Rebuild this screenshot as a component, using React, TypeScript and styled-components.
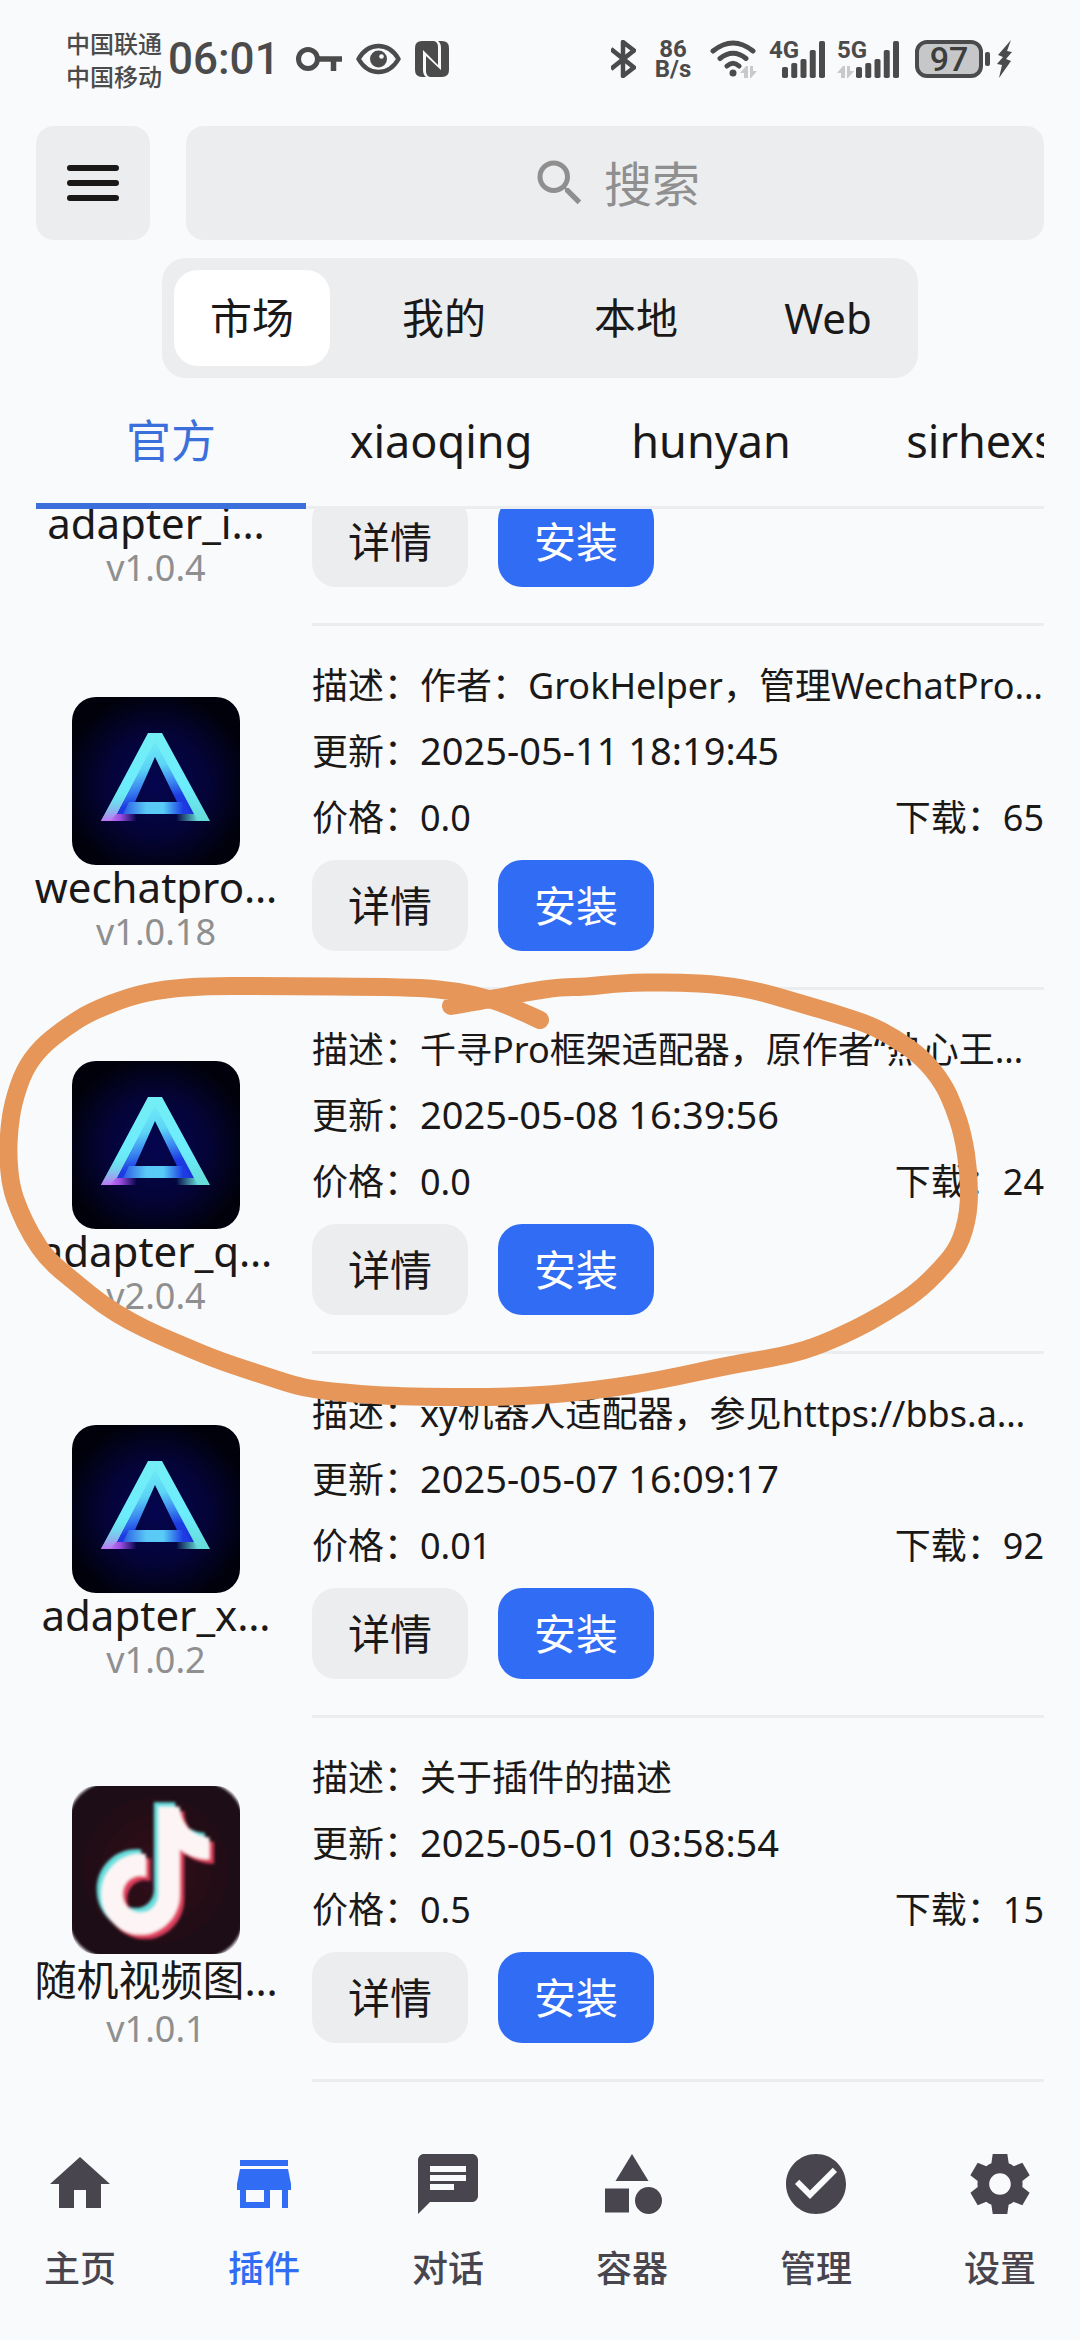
import React, { useLayoutEffect, useRef } from "react";
import styled, { createGlobalStyle } from "styled-components";
import {
  MdCategory,
  MdChat,
  MdCheckCircle,
  MdHome,
  MdSearch,
  MdStore,
} from "react-icons/md";

const color = {
  page: "#f8fafc",
  panel: "#ecedef",
  ink: "#1b1818",
  muted: "#8f8f90",
  accent: "#306cf4",
  tab: "#3b6fdc",
  status: "#4b4b4b",
  nav: "#48454e",
  marker: "#e59658",
};

const GlobalStyle = createGlobalStyle`
  *, *::before, *::after { box-sizing: border-box; }
  body {
    margin: 0;
    background: ${color.page};
    color: ${color.ink};
    font-family: "Noto Sans", "Noto Sans CJK SC", sans-serif;
  }
  button, input { font: inherit; color: inherit; border: 0; padding: 0; background: none; }
  ul { list-style: none; margin: 0; padding: 0; }
  svg { display: block; flex: none; }
`;

const Screen = styled.div`
  position: relative;
  display: flex;
  flex-direction: column;
  height: 100vh;
  overflow: hidden;
  background: ${color.page};
`;

/* ---------- status bar ---------- */

const StatusBar = styled.header`
  display: flex;
  justify-content: space-between;
  align-items: center;
  height: 126px;
  padding: 0 68px 8px 66px;
  color: ${color.status};
`;

const StatusGroup = styled.div<{ $gap: number }>`
  display: flex;
  align-items: center;
  gap: ${(p) => p.$gap}px;
`;

const Carriers = styled.div`
  font: 500 24px/33px "Noto Sans CJK SC", sans-serif;
  white-space: nowrap;
`;

const Clock = styled.time`
  font: 500 44px/48px Roboto, sans-serif;
  padding: 0 10px 0 0;
`;

const Speed = styled.div`
  width: 50px;
  font: 700 24px/20px Roboto, sans-serif;
  text-align: center;
`;

const Signal = styled.div`
  position: relative;
`;

const NetworkKind = styled.span`
  position: absolute;
  top: 0;
  left: 0;
  font: 700 24px/20px Roboto, sans-serif;
`;

const Battery = styled.div`
  display: flex;
  align-items: center;
  gap: 2px;
  padding-left: 4px;
`;

const BatteryCell = styled.span`
  width: 68px;
  height: 38px;
  border: 4px solid ${color.status};
  border-radius: 12px;
  background: #c6c7c8;
  color: #3d3d3d;
  font: 500 34px/31px Roboto, sans-serif;
  text-align: center;
`;

const BatteryTip = styled.span`
  width: 5px;
  height: 14px;
  margin-right: 5px;
  border-radius: 2px;
  background: ${color.status};
`;

const KeyIcon = () => (
  <svg width="46" height="26" viewBox="0 0 46 26" fill="none" stroke={color.status}>
    <circle cx="12" cy="13" r="9.5" strokeWidth="5" />
    <path d="M22 13H46M37.500 13V25" strokeWidth="5.500" />
  </svg>
);

const EyeIcon = () => (
  <svg width="45" height="32" viewBox="0 0 45 32" fill="none" stroke={color.status}>
    <path d="M2.500 16Q10 3 22.500 3T42.500 16Q35 29 22.500 29T2.500 16Z" strokeWidth="4.500" strokeLinejoin="round" />
    <circle cx="22.500" cy="16" r="8.500" fill={color.status} stroke="none" />
    <circle cx="25.500" cy="13.500" r="2.300" fill={color.page} stroke="none" />
  </svg>
);

const NfcIcon = () => (
  <svg width="34" height="36" viewBox="0 0 34 36">
    <path fill={color.status} d="M7 0h12q4 1 4 6v18L8 9v20q0 5 3 7H7q-7 0-7-7V7q0-7 7-7Z" />
    <path fill={color.status} d="M27 36H15q-4-1-4-6V15l15 14V7q0-5-3-7h4q7 0 7 7v22q0 7-7 7Z" />
  </svg>
);

const BluetoothIcon = () => (
  <svg width="25" height="38" viewBox="0 0 25 38" fill="none" stroke={color.status} strokeWidth="4.500" strokeLinejoin="round">
    <path d="M0 9L23 27.500L12 36V2L23 10.500L0 29" />
  </svg>
);

const Arrows = ({ x, y }: { x: number; y: number }) => (
  <path
    transform={`translate(${x} ${y})`}
    fill="#c8c9ca"
    stroke="none"
    d="M0 7L6 0H8V12H4V7ZM17 5L11 12H10V0H13V5Z"
  />
);

const WifiIcon = () => (
  <svg width="47" height="38" viewBox="0 0 47 38" fill="none" stroke={color.status} strokeWidth="5" strokeLinecap="round">
    <path d="M3 11Q23 -5 43 11M10 18.500Q23 8 36 18.500M17 26Q23 20.500 29 26" />
    <circle cx="23" cy="33" r="3.500" fill={color.status} stroke="none" />
    <Arrows x={30} y={26} />
  </svg>
);

const barHeights = [11, 15, 19, 28, 37];

const SignalBars = ({ width, arrows }: { width: number; arrows?: boolean }) => (
  <svg width={width} height="38" viewBox={`0 0 ${width} 38`}>
    {barHeights.map((h, i) => (
      <rect key={h} x={width - 43 + i * 9.25} y={38 - h} width="6" height={h} rx="1.800" fill={color.status} />
    ))}
    {arrows && <Arrows x={0} y={26} />}
  </svg>
);

const BoltIcon = () => (
  <svg width="15" height="40" viewBox="0 0 15 40" fill={color.status}>
    <path d="M14 1L1 16L6 18L0 25L5 26L2 39L14 22L9 20L15 13L10 12Z" />
  </svg>
);

/* ---------- search and sections ---------- */

const SearchRow = styled.div`
  display: flex;
  gap: 36px;
  height: 114px;
  padding: 0 36px;
`;

const MenuButton = styled.button`
  display: grid;
  place-items: center;
  width: 114px;
  border-radius: 18px;
  background: ${color.panel};
`;

const SearchBox = styled.label`
  flex: 1;
  display: flex;
  justify-content: center;
  align-items: center;
  gap: 14px;
  border-radius: 18px;
  background: ${color.panel};
  color: ${color.muted};
`;

const SearchInput = styled.input`
  width: 96px;
  height: 72px;
  font-size: 48px;
  outline: none;
  &::placeholder { color: ${color.muted}; opacity: 1; }
`;

const Segments = styled.nav`
  align-self: center;
  display: flex;
  gap: 36px;
  margin-top: 18px;
  padding: 12px;
  border-radius: 24px;
  background: ${color.panel};
`;

const Segment = styled.button<{ $active: boolean }>`
  width: 156px;
  height: 96px;
  border-radius: 24px;
  background: ${(p) => (p.$active ? "#ffffff" : "transparent")};
  font-size: 42px;
  line-height: 60px;
`;

const Tabs = styled.nav`
  flex: none;
  display: flex;
  height: 131px;
  margin: 0 36px;
  overflow: hidden;
  box-shadow: inset 0 -3px ${color.panel};
`;

const Tab = styled.button<{ $active: boolean }>`
  flex: 0 0 270px;
  border-bottom: 6px solid ${(p) => (p.$active ? color.tab : "transparent")};
  color: ${(p) => (p.$active ? color.tab : color.ink)};
  font-size: 45px;
  line-height: 60px;
`;

/* ---------- plugin list ---------- */

const List = styled.ul`
  flex: 1;
  min-height: 0;
  padding: 0 36px;
  overflow-x: hidden;
  overflow-y: auto;
  scrollbar-width: none;
`;

const Row = styled.li`
  display: flex;
  gap: 36px;
`;

const Summary = styled.div<{ $tall: boolean }>`
  flex: none;
  display: flex;
  flex-direction: column;
  align-items: center;
  width: 240px;
  padding-top: ${(p) => (p.$tall ? 68 : 71)}px;
`;

const PluginName = styled.strong<{ $tall: boolean }>`
  font-size: 42px;
  font-weight: 400;
  line-height: ${(p) => (p.$tall ? 52 : 44)}px;
  white-space: nowrap;
`;

const Version = styled.span`
  color: ${color.muted};
  font-size: 36px;
  line-height: 46px;
`;

const Details = styled.div`
  flex: 1;
  display: flex;
  flex-direction: column;
  justify-content: flex-end;
  min-width: 0;
  min-height: 364px;
  padding: 27px 0 36px;
  border-bottom: 3px solid ${color.panel};
`;

const Line = styled.div`
  display: flex;
  justify-content: space-between;
  font-size: 36px;
  line-height: 66px;
  white-space: nowrap;
`;

const Stamp = styled.time`
  font-size: 38px;
  line-height: 1;
`;

const Actions = styled.div`
  display: flex;
  gap: 30px;
  margin-top: 9px;
`;

const Action = styled.button<{ $primary?: boolean }>`
  width: 156px;
  height: 91px;
  border-radius: 24px;
  background: ${(p) => (p.$primary ? color.accent : color.panel)};
  color: ${(p) => (p.$primary ? "#ffffff" : color.ink)};
  font-size: 42px;
  line-height: 60px;
`;

const IconTile = styled.svg`
  width: 168px;
  height: 168px;
  border-radius: 24px;
`;

const AdapterLogo = ({ id }: { id: string }) => (
  <IconTile viewBox="0 0 168 168" aria-hidden="true">
    <defs>
      <radialGradient id={`${id}-bg`} cx="0.5" cy="0.52" r="0.55">
        <stop offset="0" stopColor="#050550" />
        <stop offset="0.55" stopColor="#040438" />
        <stop offset="1" stopColor="#01010c" />
      </radialGradient>
      <linearGradient id={`${id}-leg`} x1="0" y1="0" x2="0" y2="1">
        <stop offset="0" stopColor="#74eef4" />
        <stop offset="0.6" stopColor="#6cecfc" />
        <stop offset="1" stopColor="#66dcd8" />
      </linearGradient>
      <linearGradient id={`${id}-foot`} gradientUnits="userSpaceOnUse" x1="0" y1="98" x2="0" y2="124">
        <stop offset="0" stopColor="#78cffa" stopOpacity="0" />
        <stop offset="1" stopColor="#c274f4" />
      </linearGradient>
      <linearGradient id={`${id}-toe`} x1="0" y1="0" x2="1" y2="0">
        <stop offset="0" stopColor="#c274f4" />
        <stop offset="0.4" stopColor="#9a4fe0" />
        <stop offset="1" stopColor="#0a0550" />
      </linearGradient>
      <linearGradient id={`${id}-heel`} x1="0" y1="0" x2="1" y2="0">
        <stop offset="0" stopColor="#06104a" />
        <stop offset="1" stopColor="#66dcd8" />
      </linearGradient>
      <linearGradient id={`${id}-inner`} gradientUnits="userSpaceOnUse" x1="76" y1="44" x2="92" y2="117">
        <stop offset="0" stopColor="#70ecf6" />
        <stop offset="0.35" stopColor="#5cd4f6" />
        <stop offset="0.6" stopColor="#3a86f0" />
        <stop offset="0.8" stopColor="#1c3ce4" />
        <stop offset="1" stopColor="#1c34dc" />
      </linearGradient>
      <linearGradient id={`${id}-bar`} x1="0" y1="0" x2="1" y2="0">
        <stop offset="0" stopColor="#2a5ce4" />
        <stop offset="0.35" stopColor="#5ac8f6" />
        <stop offset="0.6" stopColor="#58ccf6" />
        <stop offset="0.9" stopColor="#1c3be4" />
      </linearGradient>
    </defs>
    <rect width="168" height="168" fill={`url(#${id}-bg)`} />
    <path d="M76 36H90L138 124H122L118 117L83 46L45 117L40 124H29Z" fill={`url(#${id}-leg)`} />
    <path d="M43 98H55L45 117L40 124H29Z" fill={`url(#${id}-foot)`} />
    <path d="M44 117H64V124H38Z" fill={`url(#${id}-toe)`} />
    <path d="M105 117H122L126 124H105Z" fill={`url(#${id}-heel)`} />
    <path fillRule="evenodd" d="M83 44L122 117H45ZM83 60L63 105H105Z" fill={`url(#${id}-inner)`} />
    <path d="M57 105H112L118 117H51Z" fill={`url(#${id}-bar)`} />
  </IconTile>
);

const notePath =
  "M16.6 5.82A4.278 4.278 0 0 1 15.54 3h-3.09v12.4a2.592 2.592 0 0 1-2.59 2.5c-1.42 0-2.6-1.16-2.6-2.6 0-1.72 1.66-3.01 3.37-2.48V9.66c-3.45-.46-6.47 2.22-6.47 5.64 0 3.33 2.76 5.7 5.69 5.7 3.14 0 5.69-2.55 5.69-5.7V9.01a7.35 7.35 0 0 0 4.3 1.38V7.3s-1.88.09-3.24-1.48z";

const VideoLogo = () => (
  <IconTile viewBox="0 0 168 168" aria-hidden="true">
    <defs>
      <radialGradient id="video-bg">
        <stop offset="0" stopColor="#340a1a" />
        <stop offset="1" stopColor="#1b0a17" />
      </radialGradient>
      <filter id="video-soft" x="-10%" y="-10%" width="120%" height="120%">
        <feGaussianBlur stdDeviation="1.600" />
      </filter>
    </defs>
    <rect width="168" height="168" fill="#eeeeef" />
    <rect x="-4" y="-4" width="176" height="176" rx="42" fill="url(#video-bg)" filter="url(#video-soft)" />
    <g filter="url(#video-soft)">
      <path d={notePath} fill="#68e0df" transform="translate(-4 -5) scale(6.900 7.100)" />
      <path d={notePath} fill="#e0405f" transform="translate(5 4) scale(6.900 7.100)" />
      <path d={notePath} fill="#fdf5f5" transform="translate(0.500 -0.500) scale(6.900 7.100)" />
    </g>
  </IconTile>
);

/* ---------- bottom navigation ---------- */

const BottomNav = styled.nav`
  flex: none;
  display: flex;
  gap: 24px;
  height: 258px;
  padding: 66px 0 48px;
`;

const NavItem = styled.button<{ $active: boolean }>`
  flex: 1;
  display: flex;
  flex-direction: column;
  align-items: center;
  gap: 22px;
  color: ${(p) => (p.$active ? color.accent : color.nav)};
  font: 500 36px/48px "Noto Sans CJK SC", sans-serif;
`;

const GearIcon = ({ size }: { size: number }) => (
  <svg width={size} height={size} viewBox="0 0 24 24" fill="currentColor">
    <path d="M19.44 12.99l-.01.02c.04-.33.08-.67.08-1.01 0-.34-.03-.66-.07-.99l.01.02 2.44-1.920-2.430-4.220-2.870 1.160.01.01c-.52-.4-1.090-.74-1.710-1h.01L14.440 2H9.570l-.44 3.070h.01c-.62.26-1.190.6-1.710 1l.01-.01-2.880-1.170-2.440 4.220 2.440 1.920.01-.02c-.04.33-.07.65-.07.99 0 .34.03.68.08 1.010l-.01-.02-2.430 1.910 2.430 4.200 2.880-1.150-.02-.04c.53.41 1.100.75 1.730 1.010h-.03L9.580 22h4.850l.44-3.070h-.01c.62-.26 1.200-.6 1.730-1.010l-.02.04 2.880 1.150 2.430-4.200-2.410-1.920zM12 15.600c-1.980 0-3.600-1.620-3.600-3.600s1.620-3.600 3.600-3.600 3.600 1.620 3.600 3.600-1.620 3.600-3.600 3.600z" />
  </svg>
);

/* ---------- hand-drawn marker ---------- */

const MarkerLayer = styled.svg`
  position: absolute;
  top: 0;
  left: 0;
  width: 100%;
  height: 100%;
  pointer-events: none;
`;

const markerPoints = [
  [451, 1006], [492, 999], [527, 992], [561, 987], [585, 987], [620, 983], [675, 982], [723, 985],
  [758, 991], [792, 1001], [833, 1013], [868, 1024], [895, 1038], [923, 1058], [943, 1083], [954, 1107],
  [963, 1135], [969, 1173], [969, 1213], [959, 1247], [940, 1270], [916, 1293], [885, 1313], [854, 1330],
  [813, 1348], [778, 1357], [730, 1365], [661, 1380], [599, 1390], [523, 1397], [406, 1397], [344, 1393],
  [303, 1388], [269, 1377], [220, 1361], [186, 1347], [158, 1335], [131, 1322], [103, 1305], [76, 1283],
  [48, 1260], [31, 1235], [19, 1210], [11, 1187], [8, 1157], [9, 1130], [13, 1103], [24, 1070],
  [41, 1047], [65, 1028], [90, 1012], [131, 996], [165, 989], [207, 986], [255, 986], [413, 987],
  [455, 991], [492, 999], [525, 1013], [540, 1020],
];

// Smooths the stroke by curving through the middle of every segment.
const markerPath = markerPoints.reduce((d, [x, y], i) => {
  if (i === 0) return `M${x} ${y}`;
  const next = markerPoints[i + 1];
  return next ? `${d}Q${x} ${y} ${(x + next[0]) / 2} ${(y + next[1]) / 2}` : `${d}L${x} ${y}`;
}, "");

type Plugin = {
  name: string;
  version: string;
  logo: "adapter" | "video";
  info?: { about: string; updated: string; price: string; downloads: number };
};

const plugins: Plugin[] = [
  { name: "adapter_i…", version: "v1.0.4", logo: "adapter" },
  {
    name: "wechatpro…", version: "v1.0.18", logo: "adapter",
    info: { about: "作者：GrokHelper，管理WechatPro…", updated: "2025-05-11 18:19:45", price: "0.0", downloads: 65 },
  },
  {
    name: "adapter_q…", version: "v2.0.4", logo: "adapter",
    info: { about: "千寻Pro框架适配器，原作者“热心王…", updated: "2025-05-08 16:39:56", price: "0.0", downloads: 24 },
  },
  {
    name: "adapter_x…", version: "v1.0.2", logo: "adapter",
    info: { about: "xy机器人适配器，参见https://bbs.a…", updated: "2025-05-07 16:09:17", price: "0.01", downloads: 92 },
  },
  {
    name: "随机视频图…", version: "v1.0.1", logo: "video",
    info: { about: "关于插件的描述", updated: "2025-05-01 03:58:54", price: "0.5", downloads: 15 },
  },
];

const segments = ["市场", "我的", "本地", "Web"];
const sources = ["官方", "xiaoqing", "hunyan", "sirhexs"];

const navItems = [
  { label: "主页", Icon: MdHome },
  { label: "插件", Icon: MdStore },
  { label: "对话", Icon: MdChat },
  { label: "容器", Icon: MdCategory },
  { label: "管理", Icon: MdCheckCircle },
  { label: "设置", Icon: GearIcon },
];

const PluginRow = ({ plugin }: { plugin: Plugin }) => {
  const { name, version, logo, info } = plugin;
  const tall = logo === "video";
  return (
    <Row>
      <Summary $tall={tall}>
        {tall ? <VideoLogo /> : <AdapterLogo id={name.replace("…", "")} />}
        <PluginName $tall={tall}>{name}</PluginName>
        <Version>{version}</Version>
      </Summary>
      <Details>
        {info && (
          <>
            <Line>描述：{info.about}</Line>
            <Line>
              <span>更新：<Stamp>{info.updated}</Stamp></span>
            </Line>
            <Line>
              <span>价格：{info.price}</span>
              <span>下载：{info.downloads}</span>
            </Line>
          </>
        )}
        <Actions>
          <Action>详情</Action>
          <Action $primary>安装</Action>
        </Actions>
      </Details>
    </Row>
  );
};

export default function App() {
  const list = useRef<HTMLUListElement>(null);

  // The list opens scrolled to its end.
  useLayoutEffect(() => {
    if (list.current) list.current.scrollTop = list.current.scrollHeight;
  }, []);

  return (
    <Screen lang="zh-CN">
      <GlobalStyle />
      <StatusBar>
        <StatusGroup $gap={6}>
          <Carriers>
            <div>中国联通</div>
            <div>中国移动</div>
          </Carriers>
          <Clock>06:01</Clock>
          <StatusGroup $gap={14}>
            <KeyIcon />
            <EyeIcon />
            <NfcIcon />
          </StatusGroup>
        </StatusGroup>
        <StatusGroup $gap={12}>
          <BluetoothIcon />
          <Speed>
            <div>86</div>
            <div>B/s</div>
          </Speed>
          <WifiIcon />
          <Signal>
            <SignalBars width={56} />
            <NetworkKind>4G</NetworkKind>
          </Signal>
          <Signal>
            <SignalBars width={62} arrows />
            <NetworkKind>5G</NetworkKind>
          </Signal>
          <Battery>
            <BatteryCell>97</BatteryCell>
            <BatteryTip />
            <BoltIcon />
          </Battery>
        </StatusGroup>
      </StatusBar>

      <SearchRow>
        <MenuButton aria-label="菜单">
          <svg width="54" height="38" viewBox="0 0 54 38" stroke={color.ink} strokeWidth="6" strokeLinecap="round">
            <path d="M4 4H50M4 19H50M4 34H50" />
          </svg>
        </MenuButton>
        <SearchBox>
          <MdSearch size={60} />
          <SearchInput type="text" placeholder="搜索" aria-label="搜索" />
        </SearchBox>
      </SearchRow>

      <Segments>
        {segments.map((label, i) => (
          <Segment key={label} $active={i === 0}>{label}</Segment>
        ))}
      </Segments>

      <Tabs>
        {sources.map((label, i) => (
          <Tab key={label} $active={i === 0}>{label}</Tab>
        ))}
      </Tabs>

      <List ref={list}>
        {plugins.map((plugin) => (
          <PluginRow key={plugin.name} plugin={plugin} />
        ))}
      </List>

      <BottomNav>
        {navItems.map(({ label, Icon }, i) => (
          <NavItem key={label} $active={i === 1}>
            <Icon size={72} />
            {label}
          </NavItem>
        ))}
      </BottomNav>

      <MarkerLayer viewBox="0 0 1080 2340" preserveAspectRatio="xMidYMin meet" aria-hidden="true">
        <path
          d={markerPath}
          fill="none"
          stroke={color.marker}
          strokeWidth="18"
          strokeLinecap="round"
          strokeLinejoin="round"
        />
      </MarkerLayer>
    </Screen>
  );
}
